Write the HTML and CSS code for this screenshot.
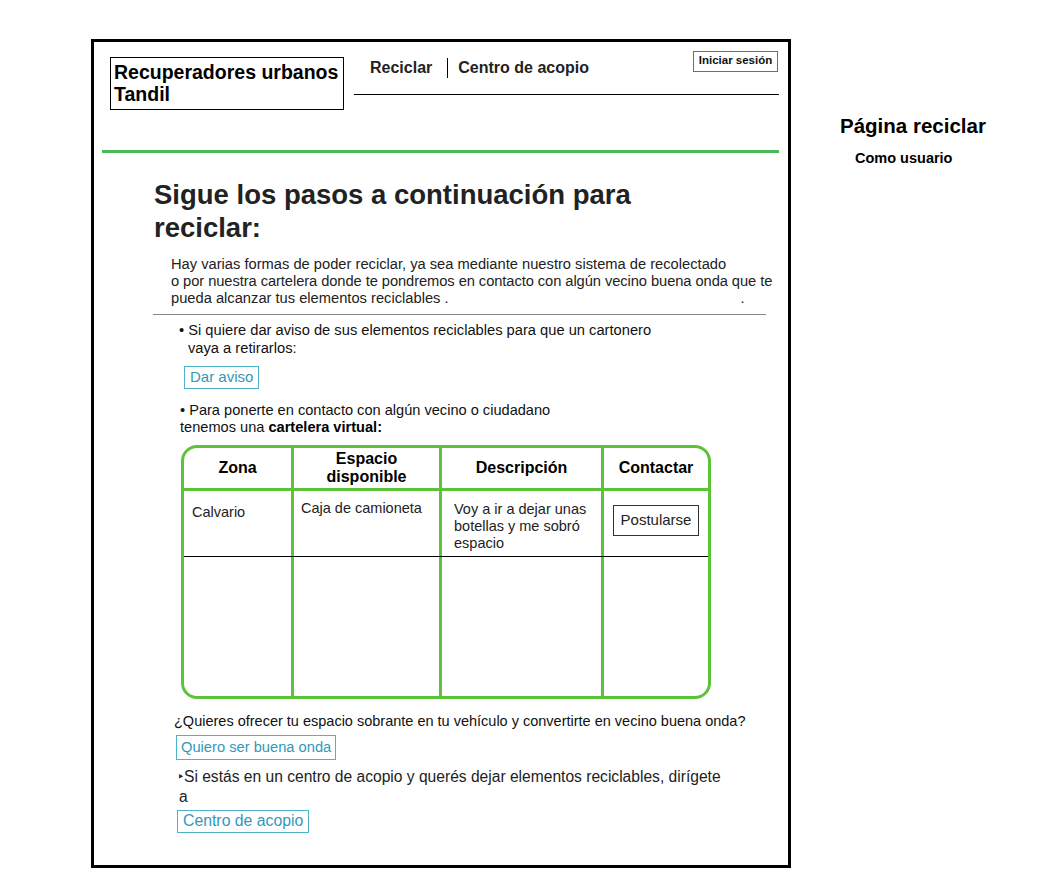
FILE: index.html
```html
<!DOCTYPE html>
<html lang="es">
<head>
<meta charset="utf-8">
<title>Página reciclar</title>
<link rel="stylesheet" href="styles.css">
</head>
<body>
<div class="page">
  <div class="frame">
    <header class="header">
      <div class="logo">Recuperadores urbanos<br>Tandil</div>
      <div class="navblock">
        <nav class="nav">
          <a class="nav-link">Reciclar</a>
          <span class="nav-sep"></span>
          <a class="nav-link nav-link-2">Centro de acopio</a>
        </nav>
        <a class="login">Iniciar sesión</a>
      </div>
    </header>
    <div class="green-rule"></div>
    <main class="main">
      <h1 class="title">Sigue los pasos a continuación para<br>reciclar:</h1>
      <p class="intro">Hay varias formas de poder reciclar, ya sea mediante nuestro sistema de recolectado<br><span class="tight">o por nuestra cartelera donde te pondremos en contacto con algún vecino buena onda que te</span><br>pueda alcanzar tus elementos reciclables .<span class="stray">.</span></p>
      <div class="hr"></div>
      <p class="bullet1">• Si quiere dar aviso de sus elementos reciclables para que un cartonero<br>vaya a retirarlos:</p>
      <a class="btn btn-aviso">Dar aviso</a>
      <p class="bullet2">• Para ponerte en contacto con algún vecino o ciudadano<br>tenemos una <b>cartelera virtual:</b></p>
      <div class="board">
        <div class="row head">
          <div class="cell">Zona</div>
          <div class="cell">Espacio<br>disponible</div>
          <div class="cell">Descripción</div>
          <div class="cell">Contactar</div>
        </div>
        <div class="row item">
          <div class="cell c-zona">Calvario</div>
          <div class="cell c-esp">Caja de camioneta</div>
          <div class="cell c-desc">Voy a ir a dejar unas<br>botellas y me sobró<br>espacio</div>
          <div class="cell c-act"><a class="post">Postularse</a></div>
        </div>
        <div class="row empty">
          <div class="cell"></div>
          <div class="cell"></div>
          <div class="cell"></div>
          <div class="cell"></div>
        </div>
      </div>
      <p class="offer">¿Quieres ofrecer tu espacio sobrante en tu vehículo y convertirte en vecino buena onda?</p>
      <a class="btn btn-onda">Quiero ser buena onda</a>
      <p class="acopio">‣Si estás en un centro de acopio y querés dejar elementos reciclables, dirígete<br><span class="acopio-a">a</span></p>
      <a class="btn btn-centro">Centro de acopio</a>
    </main>
  </div>
  <aside class="aside">
    <div class="aside-title">Página reciclar</div>
    <div class="aside-sub">Como usuario</div>
  </aside>
</div>
</body>
</html>
```
FILE: styles.css
```css
* { box-sizing: border-box; }
html, body { margin: 0; padding: 0; background: #fff; }
body {
  font-family: "Liberation Sans", Arial, sans-serif;
  color: #222;
}
a { cursor: pointer; }
p { margin: 0; }

.page {
  display: flex;
  align-items: flex-start;
  padding: 39px 0 0 91px;
}

.frame {
  width: 700px;
  height: 829px;
  border: 3px solid #000;
  display: flex;
  flex-direction: column;
}

/* header */
.header {
  display: flex;
  align-items: flex-start;
  padding: 9px 0 0 16px;
}
.logo {
  margin-top: 6px;
  width: 234px;
  height: 53px;
  border: 1px solid #000;
  padding: 3px 0 0 3px;
  font-weight: bold;
  font-size: 19.5px;
  line-height: 22px;
  color: #000;
}
.navblock {
  margin-left: 10px;
  width: 425px;
  height: 44px;
  border-bottom: 1px solid #000;
  display: flex;
  align-items: flex-start;
  justify-content: space-between;
}
.nav {
  display: flex;
  align-items: center;
  padding: 7px 0 0 16px;
}
.nav-link {
  font-weight: bold;
  font-size: 16px;
  line-height: 20px;
  color: #222;
}
.nav-sep {
  width: 1px;
  height: 20px;
  background: #000;
  margin: 0 10px 0 15px;
}
.login {
  margin-right: 1px;
  width: 85px;
  height: 21px;
  border: 1px solid #3d8c55;
  font-weight: bold;
  font-size: 11.5px;
  line-height: 17px;
  text-align: center;
  color: #111;
}

.green-rule {
  margin: 40px 9px 0 8px;
  height: 3px;
  background: #4cb85c;
}

/* main */
.main {
  display: flex;
  flex-direction: column;
  align-items: flex-start;
  padding-left: 59px;
}
.title {
  margin: 24.5px 0 0 1px;
  font-size: 27.5px;
  line-height: 33px;
  font-weight: bold;
  color: #222;
}
.intro {
  margin: 12px 0 0 18px;
  font-size: 14.7px;
  line-height: 17px;
  color: #222;
  white-space: nowrap;
}
.tight { letter-spacing: -0.07px; }
.stray { margin-left: 292px; }
.hr {
  margin-top: 7.5px;
  width: 613px;
  height: 1px;
  background: #888;
}
.bullet1 {
  margin: 6px 0 0 26px;
  padding-left: 9px;
  text-indent: -9px;
  font-size: 14.7px;
  line-height: 18px;
  color: #111;
  white-space: nowrap;
}
.btn {
  display: block;
  border: 1px solid #4cb3c8;
  color: #3498b8;
  white-space: nowrap;
}
.btn-aviso {
  margin: 9px 0 0 31px;
  height: 23px;
  padding: 0 5px;
  font-size: 15px;
  line-height: 20px;
}
.bullet2 {
  margin: 12.5px 0 0 27px;
  font-size: 14.6px;
  line-height: 17px;
  color: #111;
  white-space: nowrap;
}
.bullet2 b { color: #000; }

/* board */
.board {
  margin: 9.5px 0 0 28px;
  width: 530px;
  height: 254px;
  border: 3px solid #5cc238;
  border-radius: 16px;
  overflow: hidden;
  display: flex;
  flex-direction: column;
}
.row {
  display: grid;
  grid-template-columns: 107px 148px 162px 107px;
}
.row .cell + .cell { border-left: 3px solid #5cc238; }
.head {
  height: 43px;
  border-bottom: 3px solid #5cc238;
}
.head .cell {
  display: flex;
  align-items: center;
  justify-content: center;
  text-align: center;
  font-weight: bold;
  font-size: 16px;
  line-height: 18px;
  color: #000;
}
.item {
  height: 66px;
  border-bottom: 1px solid #000;
}
.item .cell {
  font-size: 14.5px;
  line-height: 17px;
  color: #222;
}
.c-zona { padding: 13px 0 0 8px; }
.c-esp { padding: 9px 0 0 7px; }
.c-desc { padding: 10px 0 0 12px; }
.c-act { padding: 14px 0 0 9px; }
.post {
  display: block;
  width: 86px;
  height: 31px;
  border: 1px solid #333;
  font-size: 15px;
  line-height: 28px;
  text-align: center;
  color: #222;
}
.empty { flex: 1; }

.offer {
  margin: 13px 0 0 21px;
  font-size: 14.5px;
  line-height: 18px;
  color: #111;
  white-space: nowrap;
}
.btn-onda {
  margin: 5px 0 0 23px;
  height: 25px;
  padding: 0 4px;
  font-size: 14.7px;
  line-height: 22px;
}
.acopio {
  margin: 7px 0 0 25px;
  font-size: 15.6px;
  line-height: 20px;
  color: #222;
  white-space: nowrap;
}
.acopio-a { padding-left: 1px; }
.btn-centro {
  margin: 3px 0 0 24px;
  height: 23px;
  padding: 0 5px;
  font-size: 15.8px;
  line-height: 20px;
}

/* aside */
.aside {
  margin: 75px 0 0 49px;
}
.aside-title {
  font-weight: bold;
  font-size: 20.5px;
  line-height: 24px;
  color: #000;
}
.aside-sub {
  margin: 12px 0 0 15px;
  font-weight: bold;
  font-size: 14.5px;
  line-height: 17px;
  color: #000;
}
```
